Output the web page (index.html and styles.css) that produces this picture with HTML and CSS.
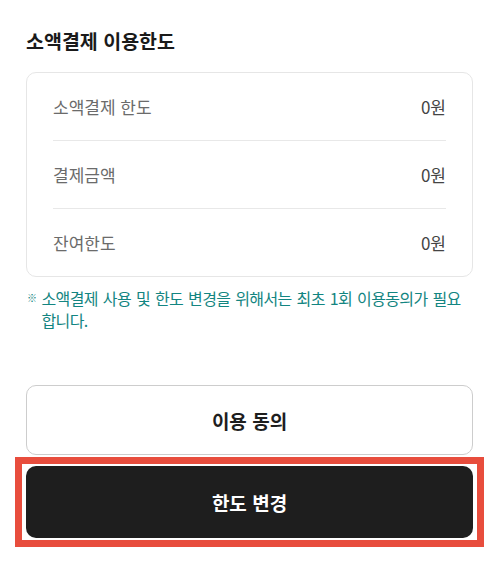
FILE: index.html
```html
<!DOCTYPE html>
<html lang="ko">
<head>
  <meta charset="UTF-8">
  <meta name="viewport" content="width=device-width, initial-scale=1.0">
  <title>소액결제 이용한도</title>
  <link rel="stylesheet" href="styles.css">
</head>
<body>

<div class="page">
  <h2 class="titulo">소액결제 이용한도</h2>

  <div class="limite-card">
    <div class="linha">
      <span class="rotulo">소액결제 한도</span>
      <span class="valor">0원</span>
    </div>
    <div class="linha">
      <span class="rotulo">결제금액</span>
      <span class="valor">0원</span>
    </div>
    <div class="linha">
      <span class="rotulo">잔여한도</span>
      <span class="valor">0원</span>
    </div>
  </div>

  <!-- 안내 문구 -->
  <p class="aviso">
    <span class="aviso-marca">※</span>
    <span>소액결제 사용 및 한도 변경을 위해서는 최초 1회 이용동의가 필요 합니다.</span>
  </p>

  <button class="btn btn-claro">이용 동의</button>

  <div class="destaque">
    <button class="btn btn-escuro">한도 변경</button>
  </div>
</div>

</body>
</html>
```

FILE: styles.css
```css
* {
  box-sizing: border-box;
  margin: 0;
  padding: 0;
}

body {
  background: #fff;
  font-family: "Noto Sans CJK KR", "Noto Sans", sans-serif;
  color: #1a1a1a;
}

.page {
  display: flex;
  flex-direction: column;
  padding: 0 27px 0 26px;
}

.titulo {
  padding-top: 29px;
  font-size: 19.5px;
  line-height: 24px;
  font-weight: bold;
  color: #1a1a1a;
}

.limite-card {
  margin-top: 19px;
  border: 1px solid #e6e6e6;
  border-radius: 10px;
  padding: 0 26px;
}

.linha {
  display: flex;
  justify-content: space-between;
  align-items: center;
  height: 68px;
  border-bottom: 1px solid #e8e8e8;
  font-size: 17px;
}

.linha:last-child {
  height: 67px;
  border-bottom: none;
}

.rotulo {
  color: #6b6b6b;
}

.valor {
  color: #444;
}

.aviso {
  display: flex;
  gap: 5px;
  margin-top: 10px;
  padding-left: 1px;
  font-size: 16px;
  line-height: 22px;
  letter-spacing: -0.6px;
  word-spacing: 1px;
  color: #138581;
}

.aviso-marca {
  font-size: 10px;
  flex-shrink: 0;
}

.btn {
  display: flex;
  align-items: center;
  justify-content: center;
  width: 100%;
  border-radius: 10px;
  font-family: inherit;
  font-size: 19px;
  font-weight: bold;
  cursor: pointer;
}

.btn-claro {
  margin-top: 54px;
  height: 70px;
  background: #fff;
  border: 1px solid #cdcdcd;
  color: #1e1e1e;
}

.destaque {
  margin: 2px -11px 0;
  padding: 2px 4px;
  border: 7px solid #e84d3d;
}

.btn-escuro {
  height: 72px;
  background: #1e1e1e;
  border: none;
  color: #fff;
}
```
